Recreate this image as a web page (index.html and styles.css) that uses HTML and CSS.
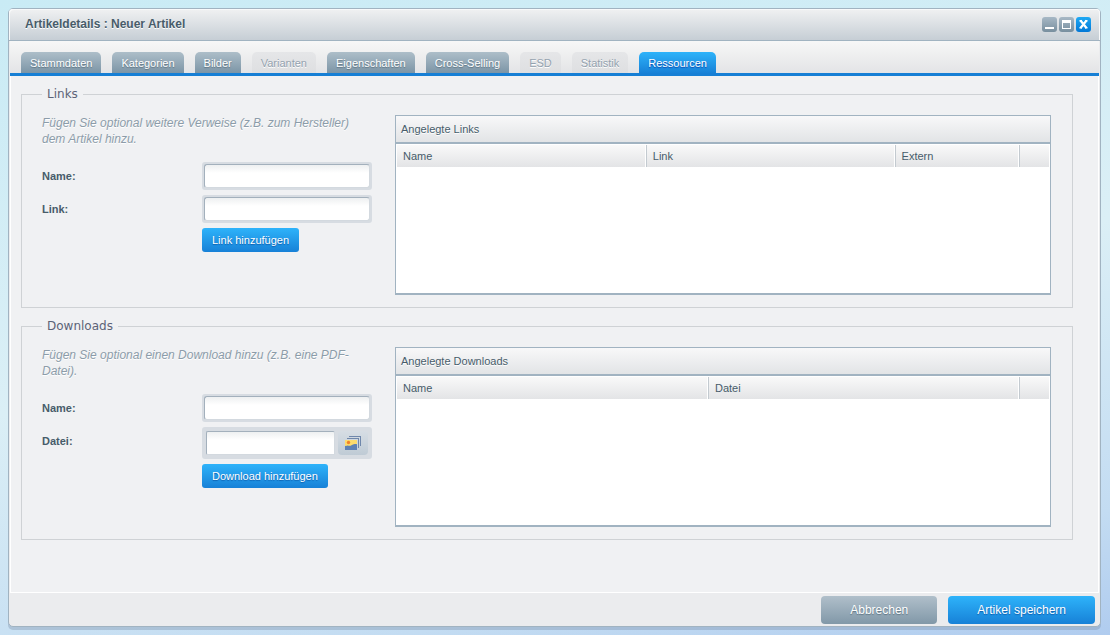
FILE: index.html
```html
<!DOCTYPE html>
<html lang="de">
<head>
<meta charset="utf-8">
<title>Artikeldetails : Neuer Artikel</title>
<link rel="stylesheet" href="styles.css">
</head>
<body>
<main class="window">
  <header class="titlebar">
    <h1 class="title">Artikeldetails : Neuer Artikel</h1>
    <div class="tools">
      <button type="button" class="tool" aria-label="Minimieren">
        <svg width="15" height="15" viewBox="0 0 15 15"><rect x="3" y="10" width="9" height="2" fill="#fff"/></svg>
      </button>
      <button type="button" class="tool" aria-label="Maximieren">
        <svg width="15" height="15" viewBox="0 0 15 15"><path fill="#fff" fill-rule="evenodd" d="M3 3h9v9H3zM4 6v5h7V6z"/></svg>
      </button>
      <button type="button" class="tool tool-close" aria-label="Schließen">
        <svg width="15" height="15" viewBox="0 0 15 15"><path fill="none" stroke="#fff" stroke-width="2.200" d="M4.500 3.500l6 7.500M10.500 3.500l-6 7.500"/><path fill="#fff" d="M3.500 3H6v1.500H3.500zM9 3h2.500v1.500H9zM3.500 10H6v1.500H3.500zM9 10h2.500v1.500H9z"/></svg>
      </button>
    </div>
  </header>
  <nav class="tabs">
    <button type="button" class="tab">Stammdaten</button>
    <button type="button" class="tab">Kategorien</button>
    <button type="button" class="tab">Bilder</button>
    <button type="button" class="tab" disabled>Varianten</button>
    <button type="button" class="tab">Eigenschaften</button>
    <button type="button" class="tab">Cross-Selling</button>
    <button type="button" class="tab" disabled>ESD</button>
    <button type="button" class="tab" disabled>Statistik</button>
    <button type="button" class="tab tab-active">Ressourcen</button>
  </nav>
  <div class="content">
    <fieldset class="group">
      <legend>Links</legend>
      <div class="columns">
        <form class="form">
          <p class="hint">Fügen Sie optional weitere Verweise (z.B. zum Hersteller) dem Artikel hinzu.</p>
          <div class="row">
            <label for="link-name">Name:</label>
            <span class="field"><input id="link-name" type="text"></span>
          </div>
          <div class="row">
            <label for="link-url">Link:</label>
            <span class="field"><input id="link-url" type="text"></span>
          </div>
          <button type="button" class="btn btn-small">Link hinzufügen</button>
        </form>
        <section class="panel">
          <h2>Angelegte Links</h2>
          <table class="grid">
            <thead><tr class="cols-links"><th>Name</th><th>Link</th><th>Extern</th><td></td></tr></thead>
          </table>
        </section>
      </div>
    </fieldset>
    <fieldset class="group">
      <legend>Downloads</legend>
      <div class="columns">
        <form class="form">
          <p class="hint">Fügen Sie optional einen Download hinzu (z.B. eine PDF-Datei).</p>
          <div class="row">
            <label for="dl-name">Name:</label>
            <span class="field"><input id="dl-name" type="text"></span>
          </div>
          <div class="row">
            <label for="dl-file">Datei:</label>
            <span class="field field-media">
              <input id="dl-file" type="text">
              <button type="button" class="pick" aria-label="Datei auswählen">
                <svg width="16" height="14" viewBox="0 0 16 14">
                  <path fill="#6f87ab" d="M4 0h12v10h-1V1H4z"/>
                  <path fill="#6f87ab" d="M2 2h12v10h-1V3H2z"/>
                  <path fill="#fddc6c" d="M0 4h12v6H0z"/>
                  <path fill="#5f82b4" d="M0 10c3-.5 5 .3 7-1 2-1 3-1 5-.8V14H0z"/>
                  <circle cx="3.500" cy="6.500" r="1.700" fill="#f0822c"/>
                </svg>
              </button>
            </span>
          </div>
          <button type="button" class="btn btn-small">Download hinzufügen</button>
        </form>
        <section class="panel">
          <h2>Angelegte Downloads</h2>
          <table class="grid">
            <thead><tr class="cols-downloads"><th>Name</th><th>Datei</th><td></td></tr></thead>
          </table>
        </section>
      </div>
    </fieldset>
  </div>
  <footer class="footer">
    <button type="button" class="btn btn-large btn-grey">Abbrechen</button>
    <button type="button" class="btn btn-large">Artikel speichern</button>
  </footer>
</main>
</body>
</html>
```

FILE: styles.css
```css
* {
  box-sizing: border-box;
}

body {
  margin: 0;
  min-height: 100vh;
  padding: 8px 9px 8px 8px;
  display: flex;
  font: 11px/16px "Liberation Sans", Arial, sans-serif;
  color: #475c6a;
  background: linear-gradient(170deg, #c9ebf5 0%, #dbeff6 50%, #c3dcf2 85%, #b0ccef 100%);
}

button,
input {
  font: inherit;
}

button {
  border: 0;
  padding: 0;
  color: inherit;
}

.window {
  flex: 1;
  min-width: 0;
  display: flex;
  flex-direction: column;
  border: 1px solid #a1b3c1;
  border-radius: 5px;
  background: #ebecee;
  box-shadow: 0 3px 0 rgba(120, 140, 165, 0.35);
}

.titlebar {
  display: flex;
  justify-content: space-between;
  padding: 7px 9px 0 16px;
  height: 32px;
  border-bottom: 1px solid #a1b3c1;
  border-radius: 4px 4px 0 0;
  background: linear-gradient(#f0f1f2, #c6ced5);
  box-shadow: inset 1px 1px 0 #f8f9fa, inset -1px 0 0 #f8f9fa;
}

.title {
  margin: 0;
  font-size: 12px;
  line-height: 16px;
  text-shadow: 0 1px 0 #fff;
}

.tools {
  display: flex;
  gap: 2px;
}

.tool {
  width: 15px;
  height: 15px;
  margin-top: 1px;
  border-radius: 3px;
  background: linear-gradient(#a7b8c5, #788f9f);
}

.tool svg,
.pick svg {
  display: block;
}

.tool-close {
  background: linear-gradient(#1fa9f4, #0378d6);
}

.tabs {
  display: flex;
  gap: 11px;
  margin: 0 1px;
  padding: 11px 11px 0;
  border-bottom: 3px solid #167fd5;
  background: linear-gradient(#f7f7f7, #e3e4e6);
}

.tab {
  height: 21px;
  padding: 1px 9px 0;
  border-radius: 5px 5px 0 0;
  color: #fff;
  text-shadow: 0 1px 1px #5e7482;
  background: linear-gradient(#adbec9, #7c95a6);
}

.tab:disabled {
  color: #94a2af;
  text-shadow: 0 1px 0 #fff;
  background: linear-gradient(#e5e6e8, #dedfe1);
}

.tab-active {
  text-shadow: 0 1px 1px #0a48b0;
  background: linear-gradient(#2eb3fa, #1781d7);
}

.content {
  flex: 1;
  display: flex;
  flex-direction: column;
  gap: 11px;
  margin: 0 1px;
  padding: 11px 25px 11px 10px;
  border: 1px solid #fff;
  border-top: 0;
  background: #f0f1f3;
}

.group {
  margin: 0;
  min-width: 0;
  padding: 14px 21px 12px 20px;
  border: 1px solid #cfd2d5;
}

.group legend {
  padding: 0 5px;
  font: 12px/14px "DejaVu Sans", Verdana, sans-serif;
  color: #5c6377;
}

.columns {
  display: flex;
  gap: 23px;
}

.form {
  flex: 0 0 330px;
  min-width: 0;
  display: flex;
  flex-direction: column;
  gap: 5px;
}

.hint {
  margin: 0 0 10px;
  padding-right: 20px;
  font-size: 12px;
  font-style: italic;
  color: #8c9ca9;
  text-shadow: 0 1px 0 #fff;
}

.row {
  display: flex;
}

.row label {
  flex: 0 0 160px;
  font-weight: bold;
  line-height: 28px;
}

.field {
  flex: 1;
  min-width: 0;
  display: flex;
  height: 28px;
  padding: 2px;
  border-radius: 3px;
  background: #d7dce2;
}

.field input {
  flex: 1;
  min-width: 0;
  padding: 0 4px;
  border: 1px solid #a3b0bc;
  border-right-color: #d3d9df;
  border-bottom-color: #d3d9df;
  border-radius: 3px;
  background: linear-gradient(#eef0f1, #fff 8px);
}

.field-media {
  gap: 3px;
  height: 32px;
  padding: 4px;
}

.field-media input {
  border-radius: 2px;
}

.pick {
  display: grid;
  place-items: center;
  width: 30px;
  border-radius: 4px;
  background: linear-gradient(#d6dde4, #bfcbd5);
}

.btn {
  border-radius: 3px;
  color: #fff;
  text-align: center;
  text-shadow: 0 1px 1px #0d5fae;
  background: linear-gradient(#2eb3fa, #1781d7);
}

.btn-small {
  height: 24px;
  margin-left: 160px;
  padding: 0 10px;
  align-self: flex-start;
}

.panel {
  flex: 1;
  min-width: 0;
  min-height: 180px;
  border: 1px solid #a1b3c1;
  border-bottom-width: 2px;
  background: #fff;
}

.panel h2 {
  margin: 0;
  padding: 5px;
  font-size: 11px;
  font-weight: normal;
  line-height: 16px;
  border-bottom: 2px solid #a1b3c1;
  text-shadow: 0 1px 0 #fff;
  background: linear-gradient(#f8f8f9, #e2e4e6);
}

.grid {
  display: block;
  padding: 1px;
}

.grid thead {
  display: block;
}

.grid tr {
  display: grid;
  background: linear-gradient(#f9f9f9, #e3e4e6);
}

.cols-links {
  grid-template-columns: 2fr 2fr 1fr 30px;
}

.cols-downloads {
  grid-template-columns: 1fr 1fr 30px;
}

.grid th,
.grid td {
  height: 22px;
  padding: 3px 6px;
  font-weight: normal;
  text-align: left;
  border-right: 1px solid #fff;
  border-left: 1px solid #c3cad0;
}

.grid th:first-child {
  border-left: 0;
}

.grid td {
  border-right: 0;
}

.footer {
  display: flex;
  justify-content: flex-end;
  gap: 11px;
  padding: 3px 5px 2px;
}

.btn-large {
  height: 28px;
  padding: 0 29px;
  border-radius: 4px;
  font-size: 12px;
}

.btn-grey {
  text-shadow: 0 1px 1px #5e7482;
  background: linear-gradient(#b0bfca, #8198a8);
}
```
